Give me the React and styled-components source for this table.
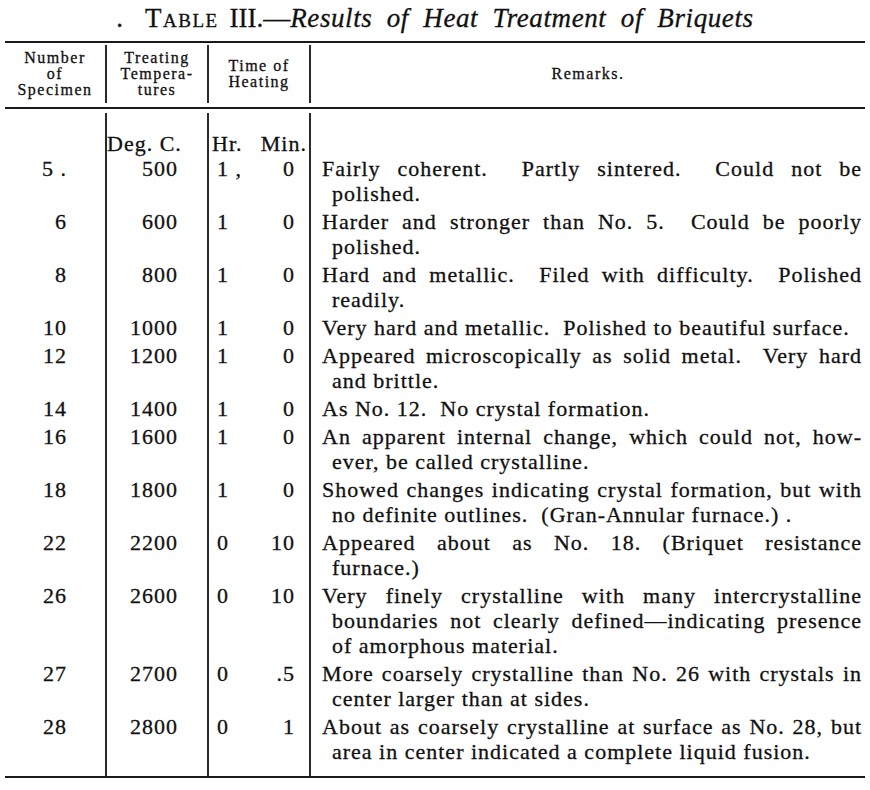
import styled, { createGlobalStyle } from 'styled-components';

const GlobalStyle = createGlobalStyle`
  body {
    margin: 0;
    background: #fff;
  }
`;

const Page = styled.div`
  width: 860px;
  padding: 3px 5px 0;
  font-family: 'Liberation Serif', 'Times New Roman', serif;
  color: #111;
  -webkit-text-stroke: 0.3px #111;
`;

const Title = styled.h1`
  margin: 0 0 8px;
  font-weight: normal;
  font-size: 27px;
  line-height: 30px;
  text-align: center;
  word-spacing: 4px;
`;

const Speck = styled.span`
  margin-right: 22px;
`;

const SmallCaps = styled.span`
  font-variant: small-caps;
  letter-spacing: 1.5px;
`;

const Caption = styled.em`
  letter-spacing: 0.6px;
  word-spacing: 7px;
`;

const Rule = styled.div`
  height: 2px;
  background: #1a1a1a;
`;

const HeadRow = styled.div`
  display: grid;
  grid-template-columns: 100px 102px 102px 556px;
  height: 58px;
  margin: 2px 0 4px;
`;

const HeadCell = styled.div`
  display: flex;
  flex-direction: column;
  align-items: center;
  justify-content: center;
  border-left: ${(p) => (p.$first ? 'none' : '2px solid #2a2a2a')};
  font-size: 16px;
  line-height: 16px;
  letter-spacing: 1.5px;
  text-align: center;
  white-space: nowrap;
`;

const Body = styled.div`
  display: grid;
  grid-template-columns: 100px 102px 48px 54px 556px;
  margin-top: 4px;
  font-size: 22px;
  line-height: 25px;
  letter-spacing: 1px;
`;

const Cell = styled.div`
  padding-top: ${(p) => p.$top || 0}px;
  padding-bottom: ${(p) => p.$bottom ?? 3}px;
  white-space: pre;
`;

const NumCell = styled(Cell)`
  text-align: right;
  padding-right: 38px;
`;

const TempCell = styled(Cell)`
  text-align: right;
  padding-right: ${(p) => (p.$head ? 26 : 29)}px;
  border-left: 2px solid #2a2a2a;
`;

const HrCell = styled(Cell)`
  padding-left: ${(p) => (p.$head ? 3 : 8)}px;
  border-left: 2px solid #2a2a2a;
`;

const MinCell = styled(Cell)`
  text-align: right;
  padding-right: ${(p) => (p.$head ? 2 : 14)}px;
`;

const RemarkCell = styled(Cell)`
  border-left: 2px solid #2a2a2a;
  padding-left: 11px;
  padding-right: 3px;
  white-space: pre-wrap;
`;

const Line = styled.div`
  padding-left: ${(p) => (p.$cont ? 10 : 0)}px;
  text-align: ${(p) => (p.$just ? 'justify' : 'left')};
  text-align-last: ${(p) => (p.$just ? 'justify' : 'auto')};
`;

// lines ending with '|' are justified to the full column width
const rows = [
  ['5 .', '500', '1 ,', '0', ['Fairly coherent.  Partly sintered.  Could not be|', 'polished.']],
  ['6', '600', '1', '0', ['Harder and stronger than No. 5.  Could be poorly|', 'polished.']],
  ['8', '800', '1', '0', ['Hard and metallic.  Filed with difficulty.  Polished|', 'readily.']],
  ['10', '1000', '1', '0', ['Very hard and metallic.  Polished to beautiful surface.']],
  ['12', '1200', '1', '0', ['Appeared microscopically as solid metal.  Very hard|', 'and brittle.']],
  ['14', '1400', '1', '0', ['As No. 12.  No crystal formation.']],
  ['16', '1600', '1', '0', ['An apparent internal change, which could not, how-|', 'ever, be called crystalline.']],
  ['18', '1800', '1', '0', ['Showed changes indicating crystal formation, but with|', 'no definite outlines.  (Gran-Annular furnace.) .']],
  ['22', '2200', '0', '10', ['Appeared about as No. 18. (Briquet resistance|', 'furnace.)']],
  ['26', '2600', '0', '10', [
    'Very finely crystalline with many intercrystalline|',
    'boundaries not clearly defined\u2014indicating presence|',
    'of amorphous material.',
  ]],
  ['27', '2700', '0', '.5', ['More coarsely crystalline than No. 26 with crystals in|', 'center larger than at sides.']],
  ['28', '2800', '0', '1', ['About as coarsely crystalline at surface as No. 28, but|', 'area in center indicated a complete liquid fusion.']],
];

function Remark({ lines, ...rest }) {
  return (
    <RemarkCell {...rest}>
      {lines.map((l, i) => {
        const just = l.endsWith('|');
        return (
          <Line key={i} $cont={i > 0} $just={just}>
            {just ? l.slice(0, -1) : l}
          </Line>
        );
      })}
    </RemarkCell>
  );
}

export default function App() {
  return (
    <Page>
      <GlobalStyle />
      <Title>
        <Speck>.</Speck>
        <SmallCaps>Table</SmallCaps> III.—<Caption>Results of Heat Treatment of Briquets</Caption>
      </Title>
      <Rule />
      <HeadRow>
        <HeadCell $first>
          <span>Number</span>
          <span>of</span>
          <span>Specimen</span>
        </HeadCell>
        <HeadCell>
          <span>Treating</span>
          <span>Tempera-</span>
          <span>tures</span>
        </HeadCell>
        <HeadCell>
          <span>Time of</span>
          <span>Heating</span>
        </HeadCell>
        <HeadCell>Remarks.</HeadCell>
      </HeadRow>
      <Rule />
      <Body>
        <NumCell $top={18} $bottom={0} />
        <TempCell $top={18} $bottom={0} $head>Deg. C.</TempCell>
        <HrCell $top={18} $bottom={0} $head>Hr.</HrCell>
        <MinCell $top={18} $bottom={0} $head>Min.</MinCell>
        <RemarkCell $top={18} $bottom={0} />
        {rows.map(([num, temp, hr, min, lines], i) => {
          const bottom = i === rows.length - 1 ? 12 : 3;
          return [
            <NumCell key={`n${i}`} $bottom={bottom}>{num}</NumCell>,
            <TempCell key={`t${i}`} $bottom={bottom}>{temp}</TempCell>,
            <HrCell key={`h${i}`} $bottom={bottom}>{hr}</HrCell>,
            <MinCell key={`m${i}`} $bottom={bottom}>{min}</MinCell>,
            <Remark key={`r${i}`} $bottom={bottom} lines={lines} />,
          ];
        })}
      </Body>
      <Rule />
    </Page>
  );
}
